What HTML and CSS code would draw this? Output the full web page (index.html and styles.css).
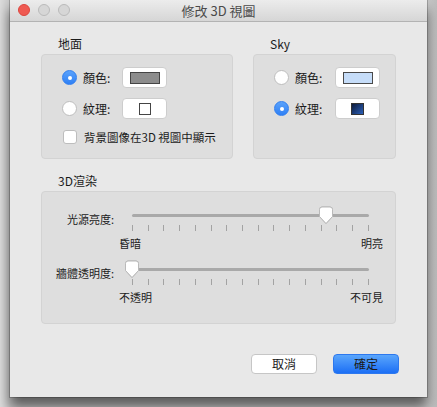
FILE: index.html
```html
<!DOCTYPE html>
<html lang="zh-Hant">
<head>
<meta charset="utf-8">
<title>修改 3D 視圖</title>
<link rel="stylesheet" href="styles.css">
</head>
<body>
<div class="window">
  <div class="titlebar">
    <div class="lights">
      <span class="light close"></span>
      <span class="light off"></span>
      <span class="light off"></span>
    </div>
    <div class="title">修改 3D 視圖</div>
  </div>
  <div class="content">
    <div class="top-row">
      <section class="group ground">
        <div class="group-label">地面</div>
        <div class="box">
          <div class="opt-row">
            <span class="radio on"></span><span class="opt-label">顏色:</span>
            <span class="swatch-btn"><span class="sw sw-gray"></span></span>
          </div>
          <div class="opt-row">
            <span class="radio"></span><span class="opt-label">紋理:</span>
            <span class="swatch-btn"><span class="sw sw-empty"></span></span>
          </div>
          <div class="check-row">
            <span class="checkbox"></span><span class="opt-label">背景圖像在3D 視圖中顯示</span>
          </div>
        </div>
      </section>
      <section class="group sky">
        <div class="group-label">Sky</div>
        <div class="box">
          <div class="opt-row">
            <span class="radio"></span><span class="opt-label">顏色:</span>
            <span class="swatch-btn"><span class="sw sw-blue"></span></span>
          </div>
          <div class="opt-row">
            <span class="radio on"></span><span class="opt-label">紋理:</span>
            <span class="swatch-btn"><span class="sw sw-tex"></span></span>
          </div>
        </div>
      </section>
    </div>

    <section class="group render">
      <div class="group-label">3D渲染</div>
      <div class="box render-box">
        <div class="slider-row">
          <div class="slider-label">光源亮度:</div>
          <div class="slider">
            <div class="rail">
              <div class="track"></div>
              <svg class="thumb" style="left:82%" width="16" height="19" viewBox="0 0 16 19"><path d="M1.5 3.5 Q1.5 1 4 1 H12 Q14.5 1 14.5 3.5 V10.5 L8 17.5 L1.5 10.5 Z" fill="#fff" stroke="#b9b9b9" stroke-width="1"/></svg>
            </div>
            <div class="ticks"><i></i><i></i><i></i><i></i><i></i><i></i><i></i><i></i><i></i><i></i><i></i><i></i><i></i><i></i><i></i><i></i></div>
            <div class="ends"><span>昏暗</span><span>明亮</span></div>
          </div>
        </div>
        <div class="slider-row">
          <div class="slider-label">牆體透明度:</div>
          <div class="slider">
            <div class="rail">
              <div class="track"></div>
              <svg class="thumb" style="left:0%" width="16" height="19" viewBox="0 0 16 19"><path d="M1.5 3.5 Q1.5 1 4 1 H12 Q14.5 1 14.5 3.5 V10.5 L8 17.5 L1.5 10.5 Z" fill="#fff" stroke="#b9b9b9" stroke-width="1"/></svg>
            </div>
            <div class="ticks"><i></i><i></i><i></i><i></i><i></i><i></i><i></i><i></i><i></i><i></i><i></i><i></i><i></i><i></i><i></i><i></i></div>
            <div class="ends"><span>不透明</span><span>不可見</span></div>
          </div>
        </div>
      </div>
    </section>

    <div class="buttons">
      <button class="btn">取消</button>
      <button class="btn primary">確定</button>
    </div>
  </div>
</div>
</body>
</html>
```

FILE: styles.css
```css
html, body {
  margin: 0;
  padding: 0;
}
body {
  width: 437px;
  height: 407px;
  overflow: hidden;
  background: linear-gradient(90deg, #dcdcdc 0px, #c8c8c8 10px, #c8c8c8 427px, #bdbdbd 437px);
  font-family: "Noto Sans CJK TC", "Noto Sans", sans-serif;
  color: #1b1b1b;
}
.window {
  margin-left: 10px;
  width: 417px;
  height: 397px;
  background: #e8e8e8;
  display: flex;
  flex-direction: column;
  box-shadow: 0 10px 12px rgba(0,0,0,0.55), 0 0 0 1px rgba(0,0,0,0.2);
}
.titlebar {
  height: 21px;
  flex: none;
  position: relative;
  background: linear-gradient(#ececec, #d6d6d6);
  border-bottom: 1px solid #b3b3b3;
  display: flex;
  align-items: center;
  justify-content: center;
}
.lights {
  position: absolute;
  left: 8px;
  top: 4px;
  display: flex;
  gap: 8px;
}
.light {
  width: 12px;
  height: 12px;
  border-radius: 50%;
  box-sizing: border-box;
}
.light.close {
  background: #ef5a52;
  border: 1px solid #dc463f;
}
.light.off {
  background: #d6d6d6;
  border: 1px solid #bababa;
}
.title {
  font-size: 13px;
  line-height: 16px;
  color: #4a4a4a;
}
.content {
  flex: 1;
  padding: 14px 28px 0 31px;
  display: flex;
  flex-direction: column;
}
.top-row {
  display: flex;
  gap: 20px;
}
.group-label {
  font-size: 12px;
  line-height: 16px;
  padding-left: 17px;
  margin-bottom: 2px;
}
.box {
  background: #dedede;
  border: 1px solid #d3d3d3;
  border-radius: 4px;
  box-sizing: border-box;
}
.ground .box {
  width: 192px;
  height: 105px;
  padding: 12px 0 0 20px;
}
.sky .box {
  width: 143px;
  height: 105px;
  padding: 12px 0 0 20px;
}
.opt-row {
  display: flex;
  align-items: center;
  height: 21px;
  margin-bottom: 10px;
}
.radio {
  width: 15px;
  height: 15px;
  border-radius: 50%;
  box-sizing: border-box;
  background: #fff;
  border: 1px solid #bdbdbd;
  flex: none;
  position: relative;
}
.radio.on {
  background: linear-gradient(#5aa2fb, #2f80f5);
  border: 1px solid #2f7ef0;
}
.radio.on::after {
  content: "";
  position: absolute;
  left: 4.5px;
  top: 4.5px;
  width: 4px;
  height: 4px;
  border-radius: 50%;
  background: #fff;
}
.opt-label {
  font-size: 12px;
  line-height: 16px;
  margin-left: 6px;
}
.ground .opt-label { width: 39px; }
.sky .opt-label { width: 40px; }
.check-row .opt-label { width: auto; margin-left: 7px; font-size: 11.5px; }
.swatch-btn {
  width: 45px;
  height: 21px;
  box-sizing: border-box;
  background: #fff;
  border: 1px solid #cdcdcd;
  border-radius: 4px;
  display: flex;
  align-items: center;
  justify-content: center;
  flex: none;
}
.sw {
  display: block;
  box-sizing: border-box;
}
.sw-gray {
  width: 30px;
  height: 12px;
  background: #8c8c8c;
  border: 1.5px solid #444;
}
.sw-blue {
  width: 30px;
  height: 12px;
  background: #c6ddf9;
  border: 1.5px solid #4a4a4a;
}
.sw-empty {
  width: 12px;
  height: 12px;
  background: #fff;
  border: 1.5px solid #444;
}
.sw-tex {
  width: 13px;
  height: 12px;
  background: linear-gradient(135deg, #0d1a3a, #2a5fb8);
  border: 1px solid #333;
}
.check-row {
  display: flex;
  align-items: center;
  height: 16px;
  margin-top: 2px;
}
.checkbox {
  width: 14px;
  height: 14px;
  box-sizing: border-box;
  background: #fff;
  border: 1px solid #bdbdbd;
  border-radius: 3px;
  flex: none;
  margin-left: 1px;
}
.render {
  margin-top: 14px;
}
.render-box {
  width: 355px;
  height: 133px;
  padding-top: 14px;
}
.slider-row {
  display: flex;
  margin-bottom: 9px;
}
.slider-label {
  width: 72px;
  text-align: right;
  font-size: 11px;
  line-height: 14px;
  padding-top: 6px;
  flex: none;
  white-space: nowrap;
}
.slider {
  margin-left: 5px;
  width: 264px;
}
.rail {
  position: relative;
  height: 19px;
  margin: 0 14px 0 13px;
}
.track {
  position: absolute;
  left: 0;
  right: 0;
  top: 8px;
  height: 3px;
  border-radius: 2px;
  background: #a9a9a9;
}
.thumb {
  position: absolute;
  top: 0;
  margin-left: -8px;
  filter: drop-shadow(0 0.5px 0.5px rgba(0,0,0,0.2));
}
.ticks {
  display: flex;
  justify-content: space-between;
  margin: 0 14px 0 13px;
  height: 6px;
}
.ticks i {
  display: block;
  width: 1px;
  height: 6px;
  background: #a3a3a3;
}
.ends {
  display: flex;
  justify-content: space-between;
  font-size: 11px;
  line-height: 16px;
  margin-top: 4px;
}
.buttons {
  display: flex;
  justify-content: flex-end;
  gap: 16px;
  margin-top: 30px;
}
.btn {
  width: 66px;
  height: 20px;
  box-sizing: border-box;
  border-radius: 4px;
  font-family: "Noto Sans CJK TC", "Noto Sans", sans-serif;
  font-size: 12px;
  line-height: 16px;
  padding: 0;
  color: #1b1b1b;
  background: #fff;
  border: 1px solid #c6c6c6;
}
.btn.primary {
  background: linear-gradient(#5aa6fc, #1c6ff5);
  border: 1px solid #2d78ee;
}
```
